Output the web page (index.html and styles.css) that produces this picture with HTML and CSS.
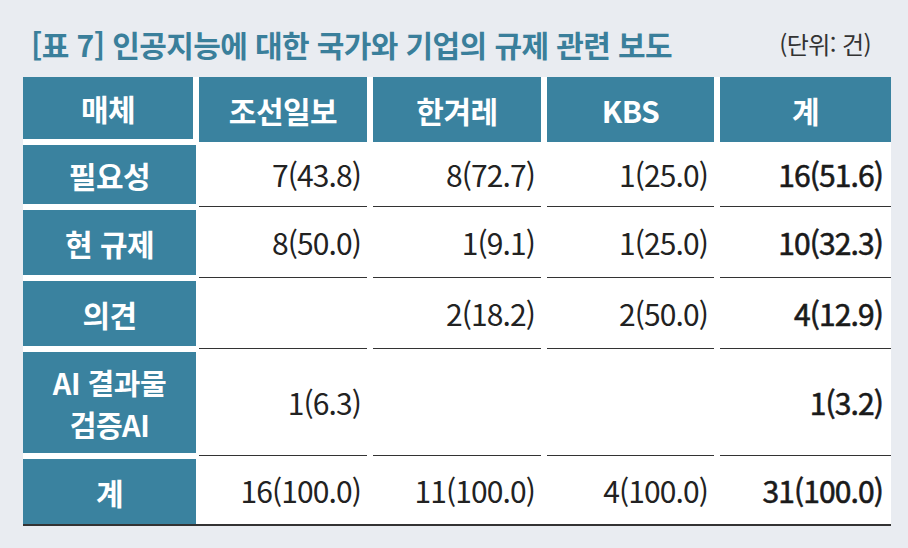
FILE: index.html
```html
<!DOCTYPE html>
<html lang="ko">
<head>
<meta charset="utf-8">
<title>표 7</title>
<link rel="stylesheet" href="styles.css">
</head>
<body>
<div class="page">
  <div class="caption">
    <h1 class="title">[표 7] 인공지능에 대한 국가와 기업의 규제 관련 보도</h1>
    <span class="unit">(단위: 건)</span>
  </div>
  <div class="table">
    <div class="th first">매체</div>
    <div class="th">조선일보</div>
    <div class="th">한겨레</div>
    <div class="th">KBS</div>
    <div class="th">계</div>

    <div class="rh">필요성</div>
    <div class="td">7(43.8)</div>
    <div class="td">8(72.7)</div>
    <div class="td">1(25.0)</div>
    <div class="td total">16(51.6)</div>

    <div class="rh">현 규제</div>
    <div class="td">8(50.0)</div>
    <div class="td">1(9.1)</div>
    <div class="td">1(25.0)</div>
    <div class="td total">10(32.3)</div>

    <div class="rh">의견</div>
    <div class="td"></div>
    <div class="td">2(18.2)</div>
    <div class="td">2(50.0)</div>
    <div class="td total">4(12.9)</div>

    <div class="rh two"><span class="line">AI 결과물</span><span class="line">검증AI</span></div>
    <div class="td">1(6.3)</div>
    <div class="td"></div>
    <div class="td"></div>
    <div class="td total">1(3.2)</div>

    <div class="rh last">계</div>
    <div class="td last">16(100.0)</div>
    <div class="td last">11(100.0)</div>
    <div class="td last">4(100.0)</div>
    <div class="td last total">31(100.0)</div>
  </div>
</div>
</body>
</html>
```

FILE: styles.css
```css
html, body {
  margin: 0;
  padding: 0;
}

body {
  background: #e9ecf1;
  font-family: "Noto Sans CJK KR", "Noto Sans", sans-serif;
  width: 908px;
  height: 548px;
  overflow: hidden;
}

.page {
  padding: 0 17px 0 23px;
}

.caption {
  height: 77px;
  display: flex;
  align-items: center;
  justify-content: space-between;
  padding: 0 20px 0 8px;
  box-sizing: border-box;
}

.title {
  margin: 0;
  padding-top: 10px;
  font-size: 30px;
  font-weight: 700;
  color: #3a7f9b;
  letter-spacing: -0.6px;
}

.unit {
  padding-top: 10px;
  font-size: 24px;
  color: #333;
  letter-spacing: -0.6px;
}

.table {
  display: grid;
  grid-template-columns: 170px 168px 168px 167px 171px;
  grid-template-rows: 65px 65px 71px 71px 107px 68px;
  column-gap: 6px;
  background: #fff;
  border-bottom: 2px solid #333;
}

.th {
  background: #3a829f;
  color: #fff;
  font-size: 30px;
  font-weight: 700;
  letter-spacing: -0.5px;
  display: flex;
  align-items: center;
  justify-content: center;
}

.th.first {
  margin-bottom: 3px;
}

.rh {
  background: #3a829f;
  color: #fff;
  font-size: 30px;
  font-weight: 700;
  letter-spacing: -0.5px;
  margin: 3px -3px 3px 0;
  display: flex;
  align-items: center;
  justify-content: center;
  text-align: center;
}

.rh.two {
  flex-direction: column;
  font-size: 29px;
  line-height: 42px;
}

.rh.two .line {
  display: block;
  white-space: nowrap;
}

.rh.last {
  margin-bottom: 0;
}

.td {
  border-bottom: 1px solid #333;
  display: flex;
  align-items: center;
  justify-content: flex-end;
  padding-right: 6px;
  font-size: 30px;
  font-weight: 400;
  color: #222;
  letter-spacing: -0.9px;
}

.td.total {
  color: #1a1a1a;
  padding-right: 8px;
  -webkit-text-stroke: 0.6px #1a1a1a;
}

.td.last {
  border-bottom: none;
}
```
